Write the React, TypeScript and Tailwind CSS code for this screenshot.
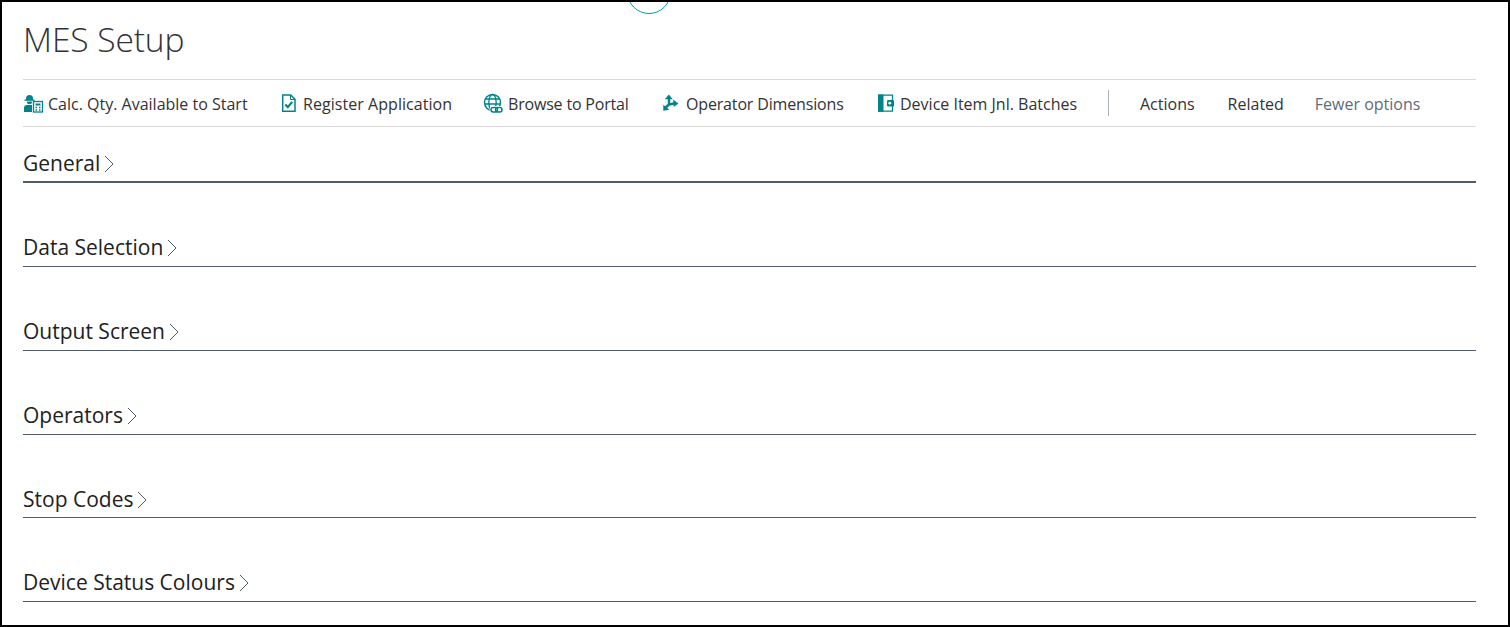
import React from "react";

const Calc = () => (
  <svg width="20" height="20" viewBox="0 0 20 20" fill="none" className="shrink-0">
    <path d="M3 5.500a3.500 3.500 0 0 1 7 0V7H3z" fill="#00838a" />
    <rect x="1.500" y="6.500" width="10" height="1.300" fill="#00838a" />
    <path d="M3.800 8.500h5.400a2.700 2.700 0 0 1-5.400 0z" fill="#00838a" />
    <path d="M1 19v-4a3 3 0 0 1 3-3h5v7z" fill="#00838a" />
    <rect x="10.500" y="8.500" width="9" height="10.500" fill="#fff" stroke="#00838a" strokeWidth="1.300" />
    <rect x="12.500" y="10.500" width="5" height="2" fill="#00838a" />
    <path d="M12.500 14.500h1.500M16 14.500h1.500M12.500 17h1.500M16 17h1.500" stroke="#00838a" strokeWidth="1.300" />
  </svg>
);

const Register = () => (
  <svg width="20" height="20" viewBox="0 0 20 20" fill="none" className="shrink-0">
    <path d="M4.700 2h8l4.300 4.300V18.300H4.700z" stroke="#00838a" strokeWidth="1.500" />
    <path d="M12.500 2v4.500H17" stroke="#00838a" strokeWidth="1" />
    <path d="M7.300 11.500l2.500 2.600 4.400-5.200" stroke="#00838a" strokeWidth="2.200" />
  </svg>
);

const Globe = () => (
  <svg width="20" height="20" viewBox="0 0 20 20" fill="none" className="shrink-0">
    <circle cx="9.500" cy="9.500" r="8" stroke="#00838a" strokeWidth="1.500" />
    <ellipse cx="9.500" cy="9.500" rx="3.700" ry="8" stroke="#00838a" strokeWidth="1.300" />
    <path d="M2 6h15M2 11h15" stroke="#00838a" strokeWidth="1.300" />
    <rect x="6.500" y="13" width="14" height="7" rx="3.500" fill="#fff" />
    <rect x="8" y="14.500" width="6.500" height="4.500" rx="2.200" stroke="#00838a" strokeWidth="1.500" />
    <rect x="12.500" y="14.500" width="6.500" height="4.500" rx="2.200" stroke="#00838a" strokeWidth="1.500" />
  </svg>
);

const Dimensions = () => (
  <svg width="20" height="20" viewBox="0 0 20 20" fill="none" className="shrink-0">
    <path d="M8 11.500V5M8 11.500l-4 3.500M8 11.500l5-1" stroke="#00838a" strokeWidth="2.400" />
    <path d="M3.800 6.200L7.800 1.500l4 4.700zM2.300 11.800v6l6-1zM12 6.500l5.400 4-4.600 3.500z" fill="#00838a" />
  </svg>
);

const Book = () => (
  <svg width="20" height="20" viewBox="0 0 20 20" fill="none" className="shrink-0">
    <path d="M3.700 2.200h13.800v16H3.700z" fill="#fff" stroke="#00838a" strokeWidth="1.300" />
    <rect x="3" y="1.500" width="5.500" height="17.300" fill="#00838a" />
    <rect x="12" y="7" width="7" height="6.500" rx="1.200" fill="#00838a" />
    <circle cx="14.800" cy="10.200" r="1.400" fill="#fff" />
  </svg>
);

const actions = [
  { icon: <Calc />, label: "Calc. Qty. Available to Start", cls: "w-[255px]", text: "" },
  { icon: <Register />, label: "Register Application", cls: "w-[205px]", text: "tracking-[0.05px]" },
  { icon: <Globe />, label: "Browse to Portal", cls: "w-[178px]", text: "tracking-[-0.18px]" },
  { icon: <Dimensions />, label: "Operator Dimensions", cls: "w-[214px]", text: "tracking-[-0.16px]" },
  { icon: <Book />, label: "Device Item Jnl. Batches", cls: "w-[233px]", text: "" },
];

const sections = ["Data Selection", "Output Screen", "Operators", "Stop Codes", "Device Status Colours"];

const Chevron = () => (
  <svg width="10" height="18" viewBox="0 0 10 18" fill="none" className="mt-[8px] ml-[4px] shrink-0">
    <path d="M1 1l8 8-8 8" stroke="#505c6d" strokeWidth="1" />
  </svg>
);

export default function App() {
  return (
    <div className="relative h-[627px] w-[1510px] overflow-hidden border-2 border-black bg-white pl-[21px] pr-[32px] font-['Open_Sans','Noto_Sans',sans-serif] text-[#212121]">
      <div className="absolute left-[625px] top-[-32px] h-[44px] w-[44px] rounded-full border border-[#00a0a8]" />
      <h1 className="h-[77px] pt-[12px] text-[33.6px] leading-[50px] font-light tracking-[-0.1px] text-[#333]">MES Setup</h1>
      <div className="flex h-[48px] items-center border-y border-[#d9d9d9] text-[16px] text-[#333]">
        {actions.map((a) => (
          <div key={a.label} className={`flex items-center gap-[5px] ${a.cls}`}>
            {a.icon}
            <span className={`whitespace-nowrap pt-[2px] ${a.text}`}>{a.label}</span>
          </div>
        ))}
        <div className="h-[26px] w-px bg-[#a8b0ba]" />
        <span className="ml-[31px] pt-[2px]">Actions</span>
        <span className="ml-[33px] pt-[2px]">Related</span>
        <span className="ml-[31px] pt-[2px] text-[#5f6b78]">Fewer options</span>
      </div>
      <section className="mt-[20px] flex h-[36px] items-start border-b-2 border-[#505c6d]">
        <span className="text-[21px] leading-[32px] font-medium">General</span>
        <Chevron />
      </section>
      {sections.map((s) => (
        <section key={s} className="mt-[48px] flex h-[35.85px] items-start border-b border-[#505c6d]">
          <span className="text-[21px] leading-[32px] font-medium">{s}</span>
          <Chevron />
        </section>
      ))}
    </div>
  );
}
